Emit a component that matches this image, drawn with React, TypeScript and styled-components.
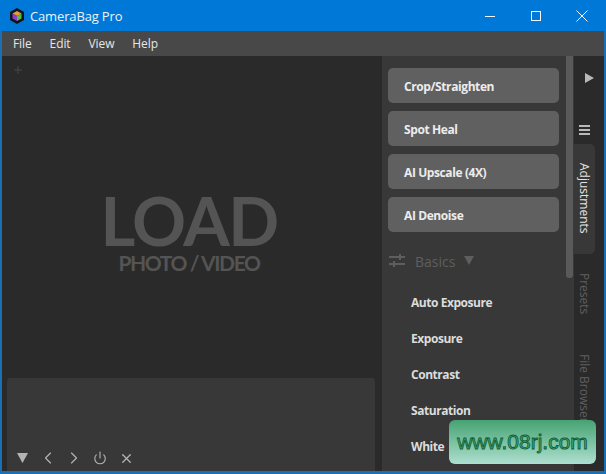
import * as React from 'react';
import styled, { createGlobalStyle } from 'styled-components';
import { Plus, ChevronLeft, ChevronRight, Power, X } from 'lucide-react';

const GlobalStyle = createGlobalStyle`
  html, body {
    margin: 0;
    padding: 0;
    background: #0078d7;
  }
  * {
    box-sizing: border-box;
  }
`;

const StyledWindow = styled.div`
  position: relative;
  width: 606px;
  height: 474px;
  display: flex;
  flex-direction: column;
  overflow: hidden;
  background: #1a6fb5;
  padding: 0 2px 3px 2px;
  font-family: 'Open Sans', 'Liberation Sans', sans-serif;
`;

const TitleBar = styled.div`
  height: 31px;
  flex-shrink: 0;
  margin: 0 -2px;
  background: #0078d7;
  display: flex;
  align-items: center;
  padding: 0 1px 0 10px;
  color: #e8f3fc;
  font-size: 13px;
`;

const AppName = styled.span`
  margin-left: 6px;
  flex-grow: 1;
  letter-spacing: -0.15px;
`;

const WindowButton = styled.div`
  width: 46px;
  height: 31px;
  display: flex;
  align-items: center;
  justify-content: center;
`;

const MenuBar = styled.div`
  height: 25px;
  flex-shrink: 0;
  background: #484848;
  display: flex;
  align-items: center;
  padding-left: 11px;
  gap: 18px;
  color: #e6e6e6;
  font-size: 12px;
  letter-spacing: -0.1px;
`;

const Body = styled.div`
  flex-grow: 1;
  min-height: 0;
  display: flex;
  background: #252525;
`;

const Stage = styled.div`
  width: 380px;
  flex-shrink: 0;
  background: #2a2a2a;
  display: flex;
  flex-direction: column;
  padding: 8px 7px 0 5px;
`;

const AddButton = styled.div`
  height: 12px;
  padding-left: 5px;
  color: #484848;
  display: flex;
  align-items: center;
`;

const LoadPrompt = styled.div`
  flex-grow: 1;
  display: flex;
  flex-direction: column;
  align-items: center;
  padding: 113px 4px 0 0;
  color: #545454;
  user-select: none;
`;

const LoadTitle = styled.div`
  font-family: Lato, sans-serif;
  font-size: 67px;
  line-height: 62px;
  letter-spacing: -1.5px;
  font-weight: 700;
`;

const LoadSubtitle = styled.div`
  font-family: Lato, sans-serif;
  font-size: 21px;
  line-height: 24px;
  letter-spacing: -1.4px;
  font-weight: 700;
`;

const Queue = styled.div`
  height: 93px;
  flex-shrink: 0;
  background: #383838;
  border-radius: 3px 3px 0 0;
  display: flex;
  align-items: flex-end;
  gap: 6px;
  padding: 0 0 4px 5px;
  color: #b4b4b4;
`;

const QueueIcon = styled.div`
  width: 20px;
  height: 18px;
  display: flex;
  align-items: center;
  justify-content: center;
`;

const SidePanel = styled.div`
  width: 192px;
  flex-shrink: 0;
  background: #383838;
  position: relative;
  padding: 12px 15px 0 6px;
  overflow: hidden;
`;

const ScrollThumb = styled.div`
  position: absolute;
  top: 0;
  right: 1px;
  width: 7px;
  height: 222px;
  background: #5a5a5a;
  border-radius: 0 0 3px 3px;
`;

const ToolButton = styled.div`
  height: 35px;
  margin-bottom: 8px;
  padding: 2px 0 0 16px;
  background: #606060;
  border-radius: 5px;
  display: flex;
  align-items: center;
  color: #ececec;
  font-size: 12px;
  font-weight: 700;
  letter-spacing: -0.4px;
`;

const SectionHeader = styled.div`
  display: flex;
  align-items: center;
  height: 28px;
  margin: 15px 0 9px 1px;
  color: #5e5e5e;
  font-size: 14px;
`;

const SectionLabel = styled.span`
  margin: 0 9px 0 10px;
`;

const Adjustment = styled.div`
  height: 36px;
  display: flex;
  align-items: center;
  padding-left: 23px;
  color: #dcdcdc;
  font-size: 12px;
  font-weight: 700;
  letter-spacing: -0.45px;
  white-space: nowrap;
`;

const TabRail = styled.div`
  flex-grow: 1;
  background: #2a2a2a;
  display: flex;
  flex-direction: column;
  overflow: hidden;
`;

const RailIcon = styled.div<{ $top: number; $height: number; $left: number }>`
  width: 21px;
  height: ${({ $height }) => $height}px;
  margin-top: ${({ $top }) => $top}px;
  margin-left: ${({ $left }) => $left}px;
  display: flex;
  justify-content: center;
  flex-shrink: 0;
`;

const Tab = styled.div<{ $active?: boolean; $height: number }>`
  width: 21px;
  height: ${({ $height }) => $height}px;
  flex-shrink: 0;
  writing-mode: vertical-rl;
  display: flex;
  align-items: center;
  padding-top: 19px;
  font-size: 12px;
  white-space: nowrap;
  background: ${({ $active }) => ($active ? '#383838' : 'transparent')};
  color: ${({ $active }) => ($active ? '#e4e4e4' : '#5f5f5f')};
  border-radius: 0 5px 5px 0;
`;

const Watermark = styled.div`
  position: absolute;
  left: 449px;
  top: 420px;
  width: 147px;
  height: 44px;
  border-radius: 6px;
  background: linear-gradient(#46a372, #aedfd0);
  display: flex;
  align-items: center;
  justify-content: center;
  color: #4fae7f;
  font-family: 'Liberation Sans', sans-serif;
  font-size: 21px;
  -webkit-text-stroke: 0.9px #0f5f35;
`;

const TOOLS = ['Crop/Straighten', 'Spot Heal', 'AI Upscale (4X)', 'AI Denoise'];
const ADJUSTMENTS = ['Auto Exposure', 'Exposure', 'Contrast', 'Saturation', 'White'];

function AppLogo() {
  return (
    <svg width="14" height="16" viewBox="0 0 14 16">
      <polygon points="7,0 14,4 14,12 7,16 0,12 0,4" fill="#15131a" strokeLinejoin="round" />
      <polygon points="7,3 11.5,5.5 7,8 2.5,5.5" fill="#e0a030" />
      <polygon points="2.5,5.5 7,8 7,13 2.5,10.5" fill="#8a3fc8" />
      <polygon points="11.5,5.5 7,8 7,13 11.5,10.5" fill="#58b84a" />
    </svg>
  );
}

function CaptionIcon(props: { children: React.ReactNode }) {
  return (
    <svg width="12" height="12" viewBox="0 0 12 12" fill="none" stroke="#f2f8fd" strokeWidth="1">
      {props.children}
    </svg>
  );
}

function SlidersIcon() {
  return (
    <svg width="16" height="14" viewBox="0 0 16 14" fill="#5e5e5e">
      <rect x="0" y="2" width="16" height="2" />
      <rect x="10" y="0" width="2" height="6" />
      <rect x="0" y="9" width="16" height="2" />
      <rect x="4" y="7" width="2" height="6" />
    </svg>
  );
}

function Triangle(props: { color: string; size: number; direction: 'down' | 'right' }) {
  const { color, size, direction } = props;
  const points = direction === 'down' ? '0,0 10,0 5,9' : '0,0 9,5 0,10';
  return (
    <svg width={size} height={size} viewBox="0 0 10 10">
      <polygon points={points} fill={color} />
    </svg>
  );
}

function HamburgerIcon() {
  return (
    <svg width="11" height="10" viewBox="0 0 11 10" fill="#b9b9b9">
      <rect y="0" width="11" height="2" />
      <rect y="4" width="11" height="2" />
      <rect y="8" width="11" height="2" />
    </svg>
  );
}

export default function App() {
  return (
    <StyledWindow>
      <GlobalStyle />
      <TitleBar>
        <AppLogo />
        <AppName>CameraBag Pro</AppName>
        <WindowButton>
          <CaptionIcon><path d="M1 6.5h10" /></CaptionIcon>
        </WindowButton>
        <WindowButton>
          <CaptionIcon><rect x="1.5" y="1.5" width="9" height="9" /></CaptionIcon>
        </WindowButton>
        <WindowButton>
          <CaptionIcon><path d="M0.5 0.5l11 11M11.5 0.5l-11 11" /></CaptionIcon>
        </WindowButton>
      </TitleBar>
      <MenuBar>
        <span>File</span>
        <span>Edit</span>
        <span>View</span>
        <span>Help</span>
      </MenuBar>
      <Body>
        <Stage>
          <AddButton><Plus size={12} strokeWidth={2} /></AddButton>
          <LoadPrompt>
            <LoadTitle>LOAD</LoadTitle>
            <LoadSubtitle>PHOTO / VIDEO</LoadSubtitle>
          </LoadPrompt>
          <Queue>
            <QueueIcon><Triangle color="#b4b4b4" size={11} direction="down" /></QueueIcon>
            <QueueIcon><ChevronLeft size={20} strokeWidth={1.4} /></QueueIcon>
            <QueueIcon><ChevronRight size={20} strokeWidth={1.4} /></QueueIcon>
            <QueueIcon><Power size={14} strokeWidth={1.9} /></QueueIcon>
            <QueueIcon><X size={15} strokeWidth={2} /></QueueIcon>
          </Queue>
        </Stage>
        <SidePanel>
          <ScrollThumb />
          {TOOLS.map((tool) => <ToolButton key={tool}>{tool}</ToolButton>)}
          <SectionHeader>
            <SlidersIcon />
            <SectionLabel>Basics</SectionLabel>
            <Triangle color="#5e5e5e" size={10} direction="down" />
          </SectionHeader>
          {ADJUSTMENTS.map((item) => <Adjustment key={item}>{item}</Adjustment>)}
        </SidePanel>
        <TabRail>
          <RailIcon $top={17} $height={52} $left={5}>
            <Triangle color="#b9b9b9" size={10} direction="right" />
          </RailIcon>
          <RailIcon $top={0} $height={19} $left={0}><HamburgerIcon /></RailIcon>
          <Tab $active $height={110}>Adjustments</Tab>
          <Tab $height={81}>Presets</Tab>
          <Tab $height={120}>File Browser</Tab>
        </TabRail>
      </Body>
      <Watermark>www.08rj.com</Watermark>
    </StyledWindow>
  );
}
